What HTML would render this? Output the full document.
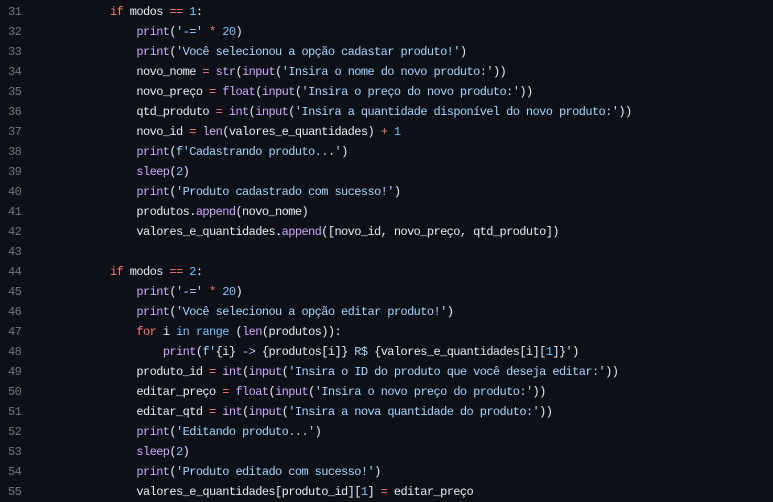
<!DOCTYPE html>
<html><head><meta charset="utf-8"><style>
html,body{margin:0;padding:0;background:#0d1117;width:773px;height:502px;overflow:hidden}
.ln{position:absolute;left:8px;top:2px;font:12px/20px "Liberation Mono",monospace;letter-spacing:-0.6px;color:#6e7681;white-space:pre}
.code{position:absolute;left:110px;top:2px;font:12px/20px "Liberation Mono",monospace;letter-spacing:-0.6px;color:#e6edf3;white-space:pre}
.k{color:#ff7b72}.f{color:#d2a8ff}.s{color:#a5d6ff}.n{color:#79c0ff}
</style></head><body>
<div class="ln">31
32
33
34
35
36
37
38
39
40
41
42
43
44
45
46
47
48
49
50
51
52
53
54
55</div>
<div class="code"><span class="k">if</span> modos <span class="k">==</span> <span class="n">1</span>:
    <span class="f">print</span>(<span class="s">'-='</span> <span class="k">*</span> <span class="n">20</span>)
    <span class="f">print</span>(<span class="s">'Você selecionou a opção cadastar produto!'</span>)
    novo_nome <span class="k">=</span> <span class="f">str</span>(<span class="f">input</span>(<span class="s">'Insira o nome do novo produto:'</span>))
    novo_preço <span class="k">=</span> <span class="f">float</span>(<span class="f">input</span>(<span class="s">'Insira o preço do novo produto:'</span>))
    qtd_produto <span class="k">=</span> <span class="f">int</span>(<span class="f">input</span>(<span class="s">'Insira a quantidade disponível do novo produto:'</span>))
    novo_id <span class="k">=</span> <span class="f">len</span>(valores_e_quantidades) <span class="k">+</span> <span class="n">1</span>
    <span class="f">print</span>(<span class="s">f'Cadastrando produto...'</span>)
    <span class="f">sleep</span>(<span class="n">2</span>)
    <span class="f">print</span>(<span class="s">'Produto cadastrado com sucesso!'</span>)
    produtos.<span class="f">append</span>(novo_nome)
    valores_e_quantidades.<span class="f">append</span>([novo_id, novo_preço, qtd_produto])

<span class="k">if</span> modos <span class="k">==</span> <span class="n">2</span>:
    <span class="f">print</span>(<span class="s">'-='</span> <span class="k">*</span> <span class="n">20</span>)
    <span class="f">print</span>(<span class="s">'Você selecionou a opção editar produto!'</span>)
    <span class="k">for</span> i <span class="n">in</span> <span class="n">range</span> (<span class="f">len</span>(produtos)):
        <span class="f">print</span>(<span class="s">f'</span>{i}<span class="s"> -&gt; </span>{produtos[i]}<span class="s"> R$ </span>{valores_e_quantidades[i][<span class="n">1</span>]}<span class="s">'</span>)
    produto_id <span class="k">=</span> <span class="f">int</span>(<span class="f">input</span>(<span class="s">'Insira o ID do produto que você deseja editar:'</span>))
    editar_preço <span class="k">=</span> <span class="f">float</span>(<span class="f">input</span>(<span class="s">'Insira o novo preço do produto:'</span>))
    editar_qtd <span class="k">=</span> <span class="f">int</span>(<span class="f">input</span>(<span class="s">'Insira a nova quantidade do produto:'</span>))
    <span class="f">print</span>(<span class="s">'Editando produto...'</span>)
    <span class="f">sleep</span>(<span class="n">2</span>)
    <span class="f">print</span>(<span class="s">'Produto editado com sucesso!'</span>)
    valores_e_quantidades[produto_id][<span class="n">1</span>] <span class="k">=</span> editar_preço</div>
</body></html>
